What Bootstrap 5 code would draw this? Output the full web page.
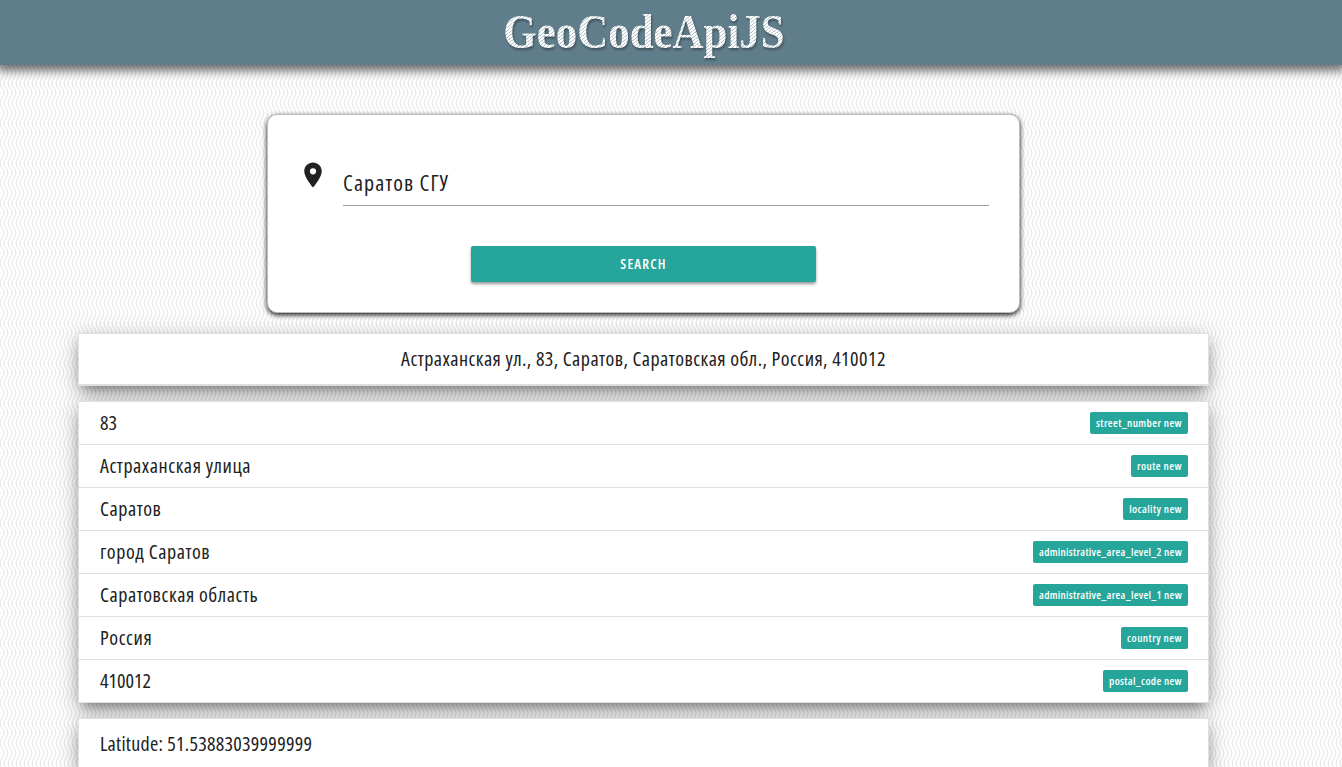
<!DOCTYPE html>
<html lang="ru">
<head>
<meta charset="utf-8">
<meta name="viewport" content="width=device-width, initial-scale=1">
<title>GeoCodeApiJS</title>
<link rel="stylesheet" href="https://cdn.jsdelivr.net/npm/bootstrap@5.3.0/dist/css/bootstrap.min.css">
<style>
html{overflow:hidden}
body{height:767px;overflow:hidden;color:#212121;font-family:"Open Sans","Noto Sans",sans-serif;font-stretch:75%;background:#fff}
.waves{position:absolute;inset:0;width:100%;height:100%;z-index:-1}
.topbar{height:65px;background:#607d8b;box-shadow:0 3px 9px 3px rgba(0,0,0,.55)}
.page-col{padding-right:55px}
.brand-title{display:inline-block;transform:scaleX(.885);font:bold 48.500px/64px "Liberation Serif",serif;color:transparent;background:repeating-linear-gradient(145deg,#fff 0 1.8px,#b4c3ca 2.2px 2.8px);-webkit-background-clip:text;background-clip:text;filter:drop-shadow(1px 2px 1px rgba(0,0,0,.35))}
.search-card{width:753px;height:199px;margin-top:49px;border:1px solid #bbb;border-radius:10px;box-shadow:0 2px 5px rgba(0,0,0,.9);padding:35px 30px 0}
.pin{margin-top:10px}
.place-input{width:646px;height:56px;border-bottom:1px solid #9e9e9e;font-size:22px;line-height:65px;letter-spacing:1.15px}
.search-btn{width:345px;height:36px;margin-top:40px;background:#26a69a;border-radius:2px;color:#fff;font-size:14px;font-weight:600;font-stretch:75%;letter-spacing:1.15px;line-height:36px;padding:0;border:0;box-shadow:0 2px 3px rgba(0,0,0,.4)}
.results{width:1131px}
.sheet{background:#fff;border:1px solid #e0e0e0;font-size:20px;letter-spacing:.56px;box-shadow:0 8px 12px -5px rgba(0,0,0,.36),0 5px 20px rgba(0,0,0,.3)}
.address{height:53px;margin-top:20px;border-bottom-width:2px;line-height:50px;letter-spacing:.45px}
.parts{margin-top:15px}
.part{height:43px;padding:0 20px 0 21px;border-bottom:1px solid #e0e0e0}
.part:last-child{border-bottom:0;height:42px}
.sheet .part.coords{height:50px}
.digits{letter-spacing:0}
.coord-text{letter-spacing:.27px}
.tag{height:22px;padding:0 6px;background:#26a69a;border-radius:2px;color:#fff;font-size:11px;font-weight:600;line-height:22px;letter-spacing:.39px;white-space:nowrap}
.tag-short{letter-spacing:.46px}
.tag-mid{letter-spacing:.33px}
.tag-long{letter-spacing:.28px}
</style>
</head>
<body>
<svg class="waves" aria-hidden="true"><defs><pattern id="w" width="4" height="20" y="3" patternUnits="userSpaceOnUse"><path fill="none" stroke="#dedede" stroke-width=".9" d="M-4 0C-4 4 0 6 0 10S-4 16-4 20M0 0C0 4 4 6 4 10S0 16 0 20M4 0C4 4 8 6 8 10S4 16 4 20"/></pattern></defs><rect width="100%" height="100%" fill="url(#w)"/></svg>
<header class="topbar page-col text-center"><span class="brand-title">GeoCodeApiJS</span></header>
<main class="page-col d-flex flex-column align-items-center">
<section class="search-card bg-white">
<div class="d-flex justify-content-between">
<svg width="30" height="30" viewBox="0 0 24 24" class="pin" fill="#212121"><path d="M12 2C8.13 2 5 5.13 5 9c0 5.25 7 13 7 13s7-7.75 7-13c0-3.87-3.13-7-7-7zm0 9.5A2.5 2.5 0 1 1 12 6.500a2.500 2.500 0 0 1 0 5z"/></svg>
<div class="place-input">Саратов СГУ</div>
</div>
<button class="search-btn btn d-block mx-auto">SEARCH</button>
</section>
<section class="results">
<div class="sheet address text-center">Астраханская ул., 83, Саратов, Саратовская обл., Россия, 410012</div>
<div class="sheet parts">
<div class="part d-flex justify-content-between align-items-center"><span class="digits">83</span><span class="tag">street_number new</span></div>
<div class="part d-flex justify-content-between align-items-center"><span>Астраханская улица</span><span class="tag tag-short">route new</span></div>
<div class="part d-flex justify-content-between align-items-center"><span>Саратов</span><span class="tag">locality new</span></div>
<div class="part d-flex justify-content-between align-items-center"><span>город Саратов</span><span class="tag tag-long">administrative_area_level_2 new</span></div>
<div class="part d-flex justify-content-between align-items-center"><span>Саратовская область</span><span class="tag tag-long">administrative_area_level_1 new</span></div>
<div class="part d-flex justify-content-between align-items-center"><span>Россия</span><span class="tag tag-short">country new</span></div>
<div class="part d-flex justify-content-between align-items-center"><span class="digits">410012</span><span class="tag tag-mid">postal_code new</span></div>
</div>
<div class="sheet parts"><div class="part coords d-flex align-items-center"><span class="coord-text">Latitude: 51.53883039999999</span></div></div>
</section>
</main>
<script src="https://cdn.jsdelivr.net/npm/bootstrap@5.3.0/dist/js/bootstrap.bundle.min.js"></script>
</body>
</html>
